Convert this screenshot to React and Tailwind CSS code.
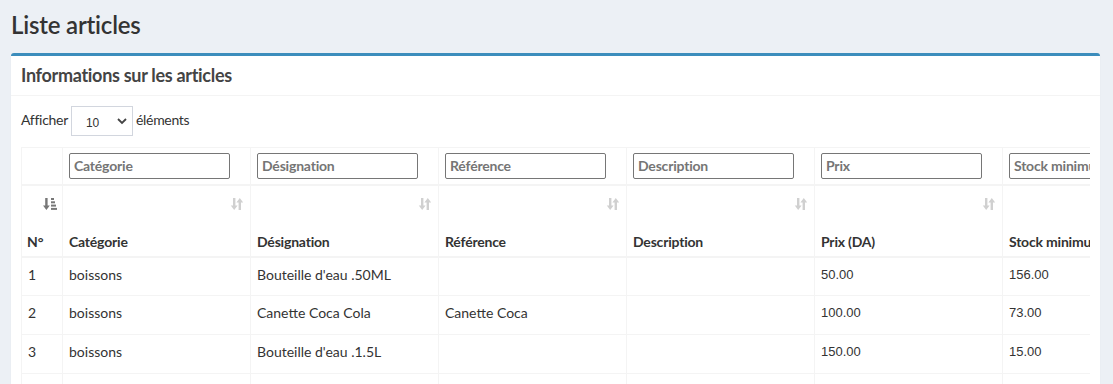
import React from 'react'

const cols = [
  { key: 'cat', label: 'Catégorie', filter: 'Catégorie' },
  { key: 'des', label: 'Désignation', filter: 'Désignation' },
  { key: 'ref', label: 'Référence', filter: 'Référence' },
  { key: 'desc', label: 'Description', filter: 'Description' },
  { key: 'prix', label: 'Prix (DA)', filter: 'Prix' },
  { key: 'stock', label: 'Stock minimum', filter: 'Stock minimum' },
]

const rows = [
  { n: 1, cat: 'boissons', des: "Bouteille d'eau .50ML", ref: '', desc: '', prix: '50.00', stock: '156.00' },
  { n: 2, cat: 'boissons', des: 'Canette Coca Cola', ref: 'Canette Coca', desc: '', prix: '100.00', stock: '73.00' },
  { n: 3, cat: 'boissons', des: "Bouteille d'eau .1.5L", ref: '', desc: '', prix: '150.00', stock: '15.00' },
  { n: 4, cat: '', des: '', ref: '', desc: '', prix: '', stock: '' },
]

function SortBoth() {
  return (
    <svg width="13" height="12" viewBox="0 0 13 12" className="text-[#d0d0d0]">
      <path d="M3 0h2.4v7.5H7.6L4.2 12 0.8 7.5H3z" fill="currentColor" />
      <path d="M8.6 12h2.4V4.5h2.2L9.8 0 6.4 4.5h2.2z" fill="currentColor" />
    </svg>
  )
}

function SortAsc() {
  return (
    <svg width="14" height="12" viewBox="0 0 14 12" className="text-[#777]">
      <path d="M2.2 0h2.4v7.5h2.2L3.4 12 0 7.5h2.2z" fill="currentColor" />
      <rect x="8" y="0" width="3" height="2" fill="currentColor" />
      <rect x="8" y="3.3" width="4" height="2" fill="currentColor" />
      <rect x="8" y="6.6" width="5" height="2" fill="currentColor" />
      <rect x="8" y="9.9" width="6" height="2" fill="currentColor" />
    </svg>
  )
}

const mono = { fontFamily: '"Liberation Sans", sans-serif' }

export default function App() {
  const font = { fontFamily: 'Lato, "Noto Sans", sans-serif' }
  return (
    <div className="min-h-screen bg-[#ecf0f5] text-[#333] pl-[11px] pr-[13px] pt-[8px]" style={font}>
      <h1 className="text-[24px] leading-[34px] font-semibold text-[#333] mb-[11px] tracking-[-0.2px]">Liste articles</h1>

      <div className="bg-white border-t-[3px] border-[#3c8dbc] rounded-[3px] shadow-[0_1px_1px_rgba(0,0,0,0.1)]">
        <div className="h-[40px] px-[10px] flex items-center border-b border-[#f4f4f4]">
          <h3 className="text-[18px] font-bold text-[#444] tracking-[-0.3px]">Informations sur les articles</h3>
        </div>

        <div className="p-[10px]">
          <div className="flex items-center gap-[3px] text-[14px] h-[30px] mb-[11px] tracking-[-0.3px]">
            <span className="pb-[3px]">Afficher</span>
            <div className="w-[62px] h-[30px] border border-[#d2d6de] flex items-center justify-between pl-[14px] pr-[4px] tracking-normal">
              <span className="text-[12px] pt-[4px]" style={mono}>10</span>
              <svg width="12" height="12" viewBox="0 0 12 12">
                <path d="M2 4l4 4 4-4" stroke="#444" strokeWidth="1.8" fill="none" />
              </svg>
            </div>
            <span className="pb-[3px]">éléments</span>
          </div>

          <div className="w-[1069px] overflow-hidden">
            <table className="table-fixed border-collapse w-[1169px] text-[14px]">
              <colgroup>
                <col className="w-[41px]" />
                {cols.map((c) => (
                  <col key={c.key} className="w-[188px]" />
                ))}
              </colgroup>
              <thead>
                <tr className="h-[37px] border-t border-[#f4f4f4]">
                  <th className="border border-[#f4f4f4]"></th>
                  {cols.map((c) => (
                    <th key={c.key} className="border border-[#f4f4f4] pl-[6px] text-left">
                      <div className="w-[161px] h-[26px] border border-[#767676] rounded-[2px] flex items-center px-[4px] text-[14px] font-bold text-[#757575] overflow-hidden whitespace-nowrap tracking-[-0.2px]">
                        {c.filter}
                      </div>
                    </th>
                  ))}
                </tr>
                <tr className="h-[72px] border-t-2 border-b-2 border-[#f4f4f4]">
                  <th className="border-x border-[#f4f4f4] align-top px-[5px] pt-[12px] text-left">
                    <div className="flex justify-end h-[12px]">
                      <SortAsc />
                    </div>
                    <div className="mt-[22px] leading-[20px] font-bold">N°</div>
                  </th>
                  {cols.map((c, i) => (
                    <th key={c.key} className="border-x border-[#f4f4f4] align-top pl-[6px] pr-[7px] pt-[12px] text-left">
                      <div className="flex justify-end h-[12px]">{i < 5 && <SortBoth />}</div>
                      <div className="mt-[22px] leading-[20px] font-bold whitespace-nowrap tracking-[-0.2px]">{c.label}</div>
                    </th>
                  ))}
                </tr>
              </thead>
              <tbody>
                {rows.map((r) => (
                  <tr key={r.n} className="h-[39px] border-b border-[#f4f4f4]">
                    <td className="border-x border-[#f4f4f4] align-top pt-[7px] px-[6px] leading-[20px]">{r.cat ? r.n : ''}</td>
                    <td className="border-x border-[#f4f4f4] align-top pt-[7px] px-[6px] leading-[20px]">{r.cat}</td>
                    <td className="border-x border-[#f4f4f4] align-top pt-[7px] px-[6px] leading-[20px] whitespace-nowrap">{r.des}</td>
                    <td className="border-x border-[#f4f4f4] align-top pt-[7px] px-[6px] leading-[20px]">{r.ref}</td>
                    <td className="border-x border-[#f4f4f4] align-top pt-[7px] px-[6px] leading-[20px]">{r.desc}</td>
                    <td className="border-x border-[#f4f4f4] align-top pt-[7px] px-[6px] leading-[20px] text-[13px]" style={mono}>{r.prix}</td>
                    <td className="border-x border-[#f4f4f4] align-top pt-[7px] px-[6px] leading-[20px] text-[13px]" style={mono}>{r.stock}</td>
                  </tr>
                ))}
              </tbody>
            </table>
          </div>
        </div>
      </div>
    </div>
  )
}
